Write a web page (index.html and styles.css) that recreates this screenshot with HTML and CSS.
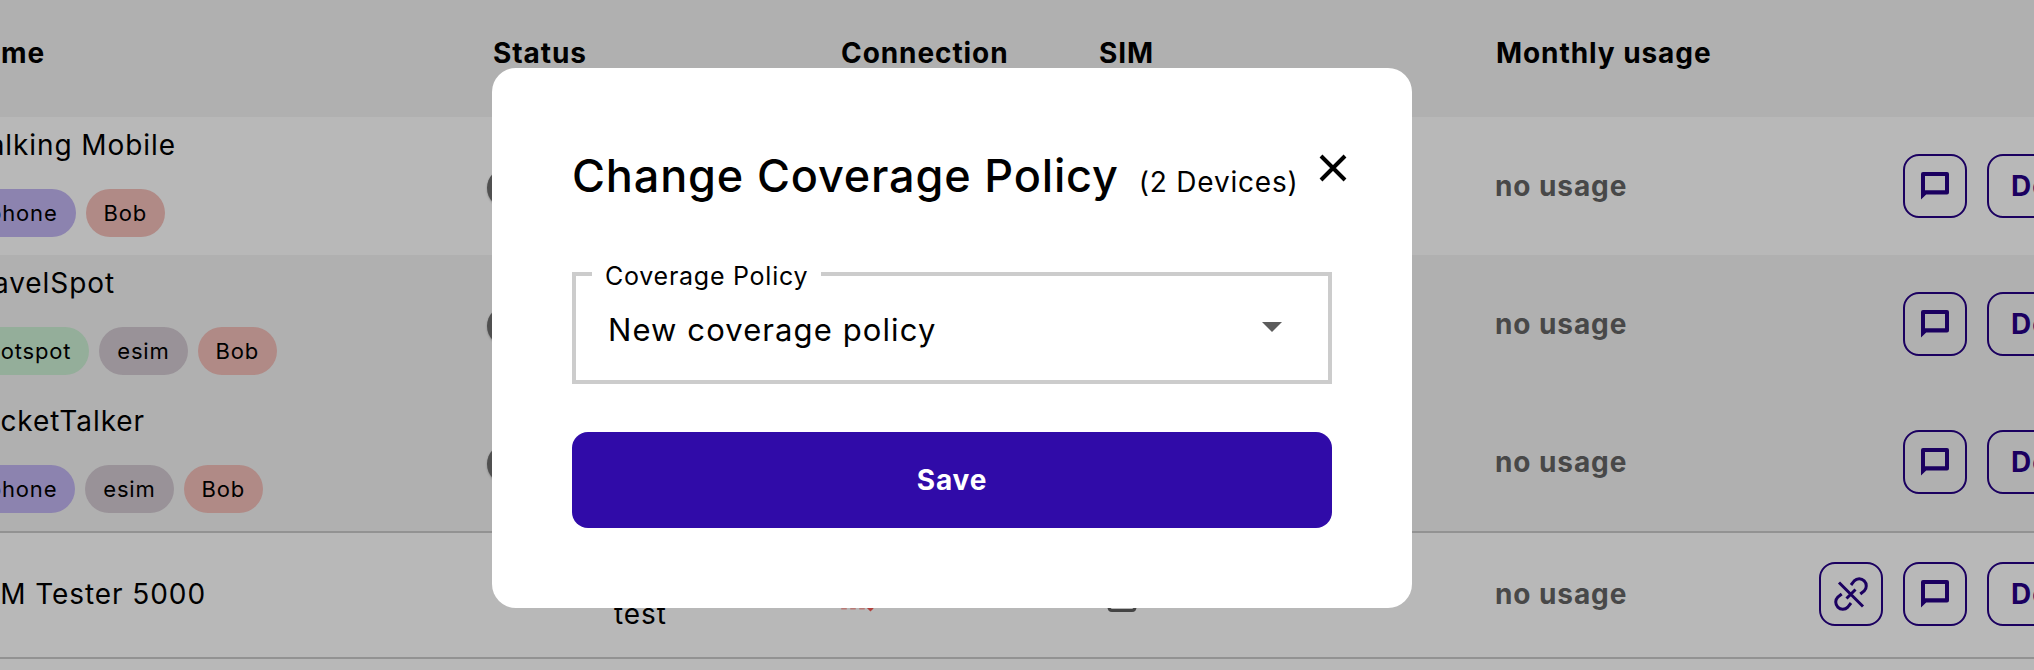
FILE: index.html
```
<!DOCTYPE html>
<html lang="en">
<head>
<meta charset="utf-8">
<title>Devices</title>
<link rel="stylesheet" href="styles.css">
</head>
<body>
<svg class="symbols" width="0" height="0">
  <symbol id="chat" viewBox="0 0 28 28"><path d="M2 0H26A2 2 0 0 1 28 2V20.500A2 2 0 0 1 26 22.500H5.200L0 27.600V2A2 2 0 0 1 2 0ZM4 4V18.200H24V4Z" fill="currentColor" fill-rule="evenodd"/></symbol>
  <symbol id="unlink" viewBox="0 0 34 34"><g fill="none" stroke="currentColor" stroke-width="3"><path d="M5 5.500 29 29.500M12.500 21.500 21.500 12.500"/><path d="M17 8 20.200 3.900A7 7 0 0 1 30.200 13.900L26.300 17"/><path d="M17 26 13.800 30.100A7 7 0 0 1 3.800 20.100L7.700 17"/></g></symbol>
</svg>
<div class="table">
  <div class="row head">
    <div class="name">Name</div><div class="status">Status</div><div class="conn">Connection</div><div class="sim">SIM</div><div class="usage">Monthly usage</div>
  </div>
  <div class="row plain">
    <div class="name"><span class="title">Talking Mobile</span><div class="tags"><span class="tag violet">phone</span><span class="tag red">Bob</span></div></div>
    <div class="status"><i class="dot"></i></div><div class="conn"></div><div class="sim"></div><div class="usage">no usage</div>
    <div class="actions"><span class="btn"><svg class="chat"><use href="#chat"/></svg></span><span class="btn wide">Details</span></div>
  </div>
  <div class="row">
    <div class="name"><span class="title">TravelSpot</span><div class="tags"><span class="tag green">hotspot</span><span class="tag gray">esim</span><span class="tag red">Bob</span></div></div>
    <div class="status"><i class="dot"></i></div><div class="conn"></div><div class="sim"></div><div class="usage">no usage</div>
    <div class="actions"><span class="btn"><svg class="chat"><use href="#chat"/></svg></span><span class="btn wide">Details</span></div>
  </div>
  <div class="row ruled">
    <div class="name"><span class="title">PocketTalker</span><div class="tags"><span class="tag violet">phone</span><span class="tag gray">esim</span><span class="tag red">Bob</span></div></div>
    <div class="status"><i class="dot"></i></div><div class="conn"></div><div class="sim"></div><div class="usage">no usage</div>
    <div class="actions"><span class="btn"><svg class="chat"><use href="#chat"/></svg></span><span class="btn wide">Details</span></div>
  </div>
  <div class="row plain ruled last">
    <div class="name"><span class="title">SIM Tester 5000</span></div>
    <div class="status"><span class="mode">test</span></div>
    <div class="conn"><svg class="signal" viewBox="0 0 36 36"><path d="M4 33.500v-6M13 33.500V20M22 33.500V13" stroke="#b87a76" stroke-width="5.500"/><path d="M2 4 32 34" stroke="#b2403c" stroke-width="4.500"/></svg></div>
    <div class="sim"><svg class="card" viewBox="0 0 30 36"><path d="M2 12 12 2H25Q28 2 28 5V31Q28 34.500 25 34.500H5Q2 34.500 2 31Z" fill="none" stroke="#444" stroke-width="3"/></svg></div>
    <div class="usage">no usage</div>
    <div class="actions"><span class="btn"><svg class="unlink"><use href="#unlink"/></svg></span><span class="btn"><svg class="chat"><use href="#chat"/></svg></span><span class="btn wide">Details</span></div>
  </div>
  <div class="row plain next"></div>
</div>
<div class="overlay">
  <div class="modal">
    <div class="modal-head"><h1>Change Coverage Policy</h1><span class="count">(2 Devices)</span>
      <svg class="close" viewBox="0 0 28 28"><path d="M2 2 26 26M26 2 2 26" stroke="#000" stroke-width="4"/></svg></div>
    <fieldset class="select"><legend>Coverage Policy</legend><span>New coverage policy</span><i class="caret"></i></fieldset>
    <button class="save">Save</button>
  </div>
</div>
</body>
</html>
```

FILE: styles.css
```
* { box-sizing: border-box; }
body { margin: 0; width: 2034px; height: 670px; overflow: hidden; font-family: Inter, sans-serif; font-size: 28px; line-height: 36px; letter-spacing: 0.92px; color: #000; background: #b8b8b8; }
.symbols { display: block; height: 0; }
.table { width: 2034px; height: 670px; overflow: hidden; }
.row { display: grid; grid-template-columns: 485px 349px 258px 403px 539px; height: 138px; align-items: center; background: #b0b0b0; }
.row > div { min-width: 0; }
.head { height: 117px; font-weight: 700; align-items: start; padding-top: 35px; }
.head .status { padding-left: 8px; }
.head .conn { padding-left: 7px; }
.head .sim { padding-left: 7px; }
.head .usage { padding-left: 1px; }
.plain { background: #b8b8b8; }
.ruled { height: 140px; border-bottom: 2px solid #929292; }
.last { height: 126px; padding-bottom: 2px; }
.next { height: 12px; }
.row:not(.head) { grid-template-columns: 485px 349px 258px 403px 1fr auto; }
.row:not(.head) .usage { font-weight: 700; color: #484848; }
.name { white-space: nowrap; display: flex; flex-direction: column; padding-bottom: 8px; }
.head .name { width: 45px; align-items: flex-end; padding-bottom: 0; }
.last .name { padding-bottom: 0; }
.title { display: flex; justify-content: flex-end; width: 176px; }
.row:nth-child(3) .title { width: 115px; }
.row:nth-child(4) .title { width: 145px; }
.last .title { width: 206px; }
.tags { display: flex; gap: 10px; margin-top: 26px; justify-content: flex-end; width: 165px; }
.row:nth-child(3) .tags { width: 277px; }
.row:nth-child(4) .tags { width: 263px; }
.tag { height: 48px; line-height: 48px; padding: 0 18px; border-radius: 24px; font-size: 22px; letter-spacing: 0.8px; }
.violet { background: #8c83af; }
.red { background: #b08a86; }
.green { background: #94ae9a; }
.gray { background: #999298; }
.dot { display: block; width: 40px; height: 40px; margin: 3px 0 0 2px; border-radius: 50%; background: #505050; box-shadow: 0 1px 2px #0004; }
.mode { display: block; margin: 40px 0 0 129px; }
.signal { display: block; width: 36px; height: 36px; margin: 0 0 0 6px; }
.card { display: block; width: 30px; height: 36px; margin: 0 0 0 15px; }
.actions { display: flex; gap: 20px; margin-right: -70px; }
.btn { display: flex; align-items: center; justify-content: center; width: 64px; height: 64px; border: 2px solid #1b0060; border-radius: 16px; color: #1b0060; }
.wide { width: 117px; justify-content: flex-start; padding-left: 22px; font-weight: 700; }
.chat { width: 28px; height: 28px; }
.unlink { width: 34px; height: 34px; }
.overlay { position: absolute; inset: 0; padding: 68px 0 0 492px; }
.modal { width: 920px; height: 540px; padding: 80px; background: #fff; border-radius: 24px; }
.modal-head { display: flex; align-items: baseline; height: 112px; white-space: nowrap; }
h1 { margin: 0; font-size: 45px; line-height: 56px; font-weight: 500; letter-spacing: 0.84px; }
.count { margin-left: 20px; letter-spacing: 0.8px; }
.close { width: 28px; height: 28px; margin: 6px 0 0 20px; align-self: flex-start; flex: none; }
.select { display: flex; justify-content: space-between; height: 124px; margin: 0; padding: 22px 46px 0 32px; border: 4px solid #ccc; font-size: 31px; letter-spacing: 1.1px; line-height: 40px; }
.select legend { font-size: 25px; line-height: 24px; letter-spacing: 0.75px; padding: 4px 13px 0 13px; margin-left: -16px; }
.caret { width: 20px; height: 10px; margin-top: 12px; background: #5c5c5c; clip-path: polygon(0 0, 100% 0, 50% 100%); }
.save { display: block; width: 760px; height: 96px; margin-top: 48px; border: 0; border-radius: 16px; background: #300ba8; color: #fff; font: 700 28px/36px Inter, sans-serif; letter-spacing: 0.8px; }
```
